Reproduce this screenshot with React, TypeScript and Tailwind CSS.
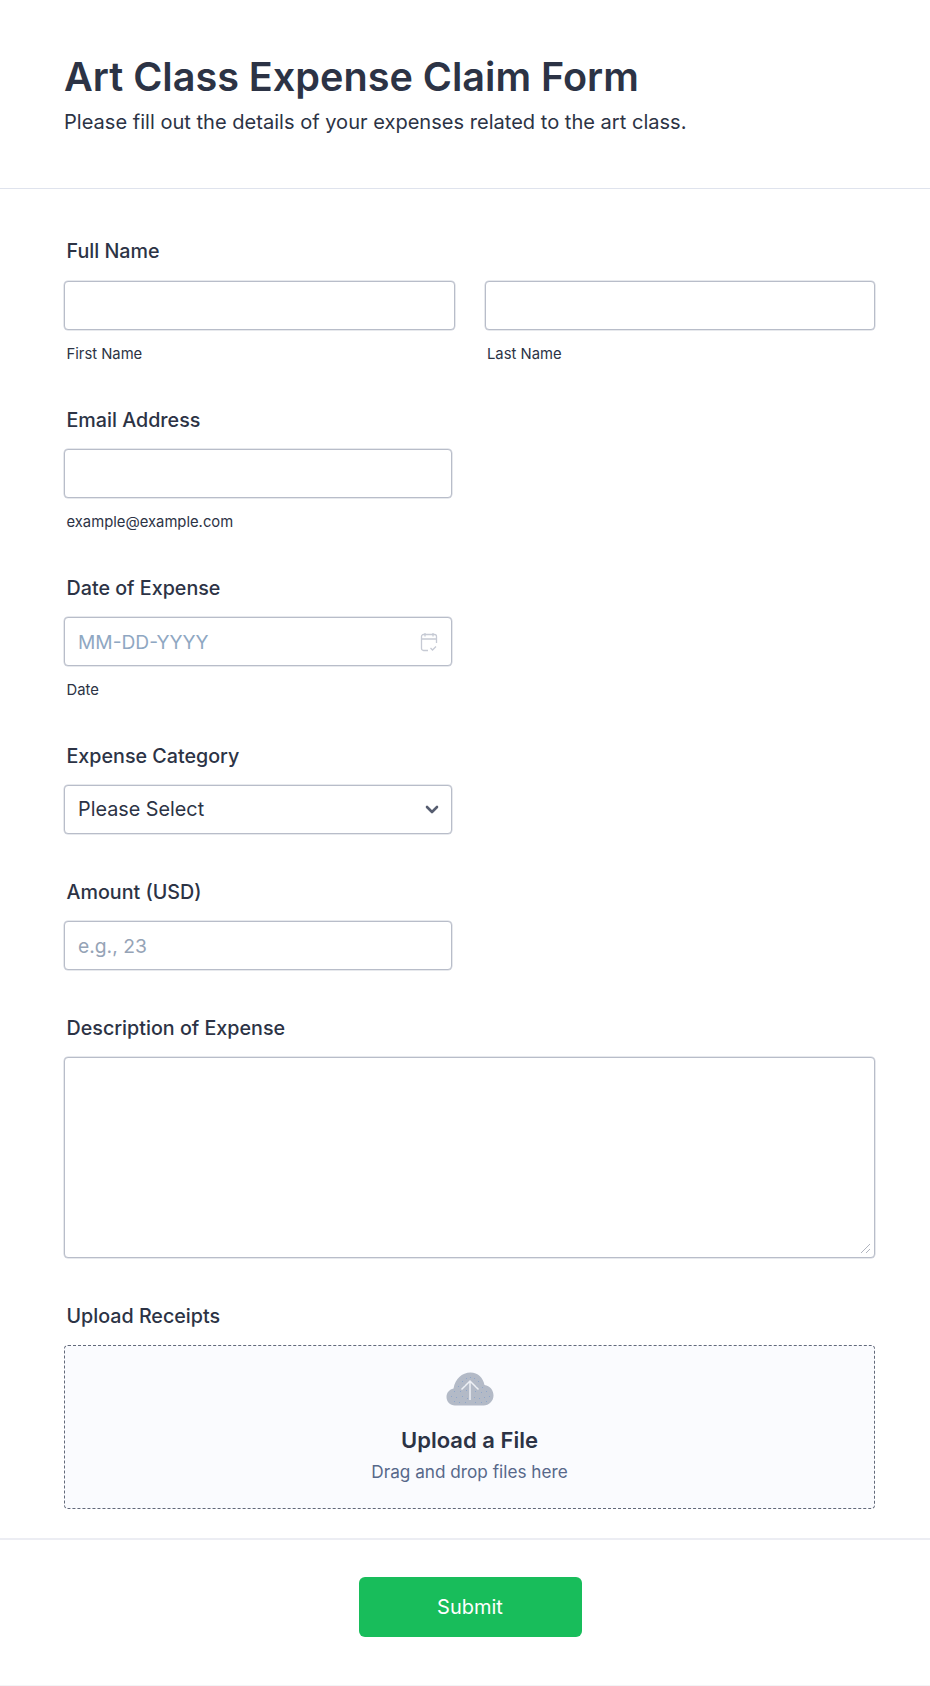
const font = "font-['Inter','Noto_Sans',sans-serif]";
const inputBox = "h-[49px] rounded-[4px] border border-[#b8bdc9] bg-white shadow-[0_0_0_0.5px_#d0d3dc]";

function Label({ children }: { children: React.ReactNode }) {
  return <div className="h-[24px] mb-[17px] pl-[2.5px] text-[19.7px] leading-[24px] font-medium text-[#2c3345]">{children}</div>;
}
function Sub({ children }: { children: React.ReactNode }) {
  return <div className="mt-[16px] h-[16px] pl-[2.5px] text-[14.8px] leading-[16px] text-[#2c3345]">{children}</div>;
}

const dots: [number, number][] = [
  [16, 9], [20, 6], [24, 5], [28, 6], [32, 9], [12, 14], [18, 13], [30, 14], [36, 15],
  [8, 19], [14, 19], [20, 18], [29, 19], [35, 20], [40, 19], [5, 24], [10, 25], [16, 24],
  [21, 26], [28, 25], [33, 26], [38, 25], [43, 24], [8, 29], [13, 30], [19, 30], [29, 30], [35, 30], [40, 29],
];

export default function App() {
  return (
    <div className={`${font} min-h-[1686px] w-[930px] bg-white flex flex-col`}>
      <header className="h-[189px] border-b border-[#dfe3ed] pl-[64px] pr-[55px] pt-[51px]">
        <h1 className="text-[39.6px] leading-[52px] font-semibold text-[#2c3345]">Art Class Expense Claim Form</h1>
        <p className="mt-[7px] text-[20.07px] leading-[24px] text-[#2c3345]">Please fill out the details of your expenses related to the art class.</p>
      </header>
      <main className="pl-[64px] pr-[55px] pt-[50px] flex flex-col gap-[46px]">
        <section>
          <div className="h-[25px] mb-[17px] pl-[2.5px] text-[19.7px] leading-[24px] font-medium text-[#2c3345]">Full Name</div>
          <div className="grid grid-cols-2 gap-[30px]">
            <div><div className={inputBox} /><Sub>First Name</Sub></div>
            <div><div className={inputBox} /><Sub>Last Name</Sub></div>
          </div>
        </section>
        <section>
          <Label>Email Address</Label>
          <div className={`${inputBox} w-[388px]`} />
          <Sub>example@example.com</Sub>
        </section>
        <section>
          <Label>Date of Expense</Label>
          <div className={`${inputBox} w-[388px] flex items-center justify-between pl-[13px] pr-[13px]`}>
            <span className="pt-[1px] text-[19.2px] text-[#8fa7c2]">MM-DD-YYYY</span>
            <svg width="18" height="20" viewBox="0 0 18 20" fill="none" stroke="#c6cad4" strokeWidth="1.3">
              <path d="M8 18.500H3.500a2 2 0 0 1-2-2V4.500a2 2 0 0 1 2-2h11a2 2 0 0 1 2 2V11" />
              <path d="M1.500 7h15M5 1v3.500M13 1v3.500" />
              <path d="M10.500 16l2 2 3.500-3.500" />
            </svg>
          </div>
          <Sub>Date</Sub>
        </section>
        <section>
          <Label>Expense Category</Label>
          <div className={`${inputBox} w-[388px] flex items-center justify-between pl-[13px] pr-[12px]`}>
            <span className="pt-[1px] text-[19.8px] text-[#2c3345]">Please Select</span>
            <svg width="14" height="9" viewBox="0 0 14 9" fill="none" stroke="#565d70" strokeWidth="2.6" strokeLinecap="round" strokeLinejoin="round">
              <path d="M2 2l5 5 5-5" />
            </svg>
          </div>
        </section>
        <section>
          <Label>Amount (USD)</Label>
          <div className={`${inputBox} w-[388px] flex items-center pl-[13px]`}>
            <span className="pt-[1px] text-[19.3px] text-[#95a3b6]">e.g., 23</span>
          </div>
        </section>
        <section>
          <Label>Description of Expense</Label>
          <div className="relative h-[201px] rounded-[4px] border border-[#b8bdc9] bg-white shadow-[0_0_0_0.5px_#d0d3dc]">
            <svg className="absolute right-[3px] bottom-[3px]" width="11" height="11" viewBox="0 0 11 11" fill="none" stroke="#b0b4bf" strokeWidth="1">
              <path d="M1 10L10 1M6 10l4-4" />
            </svg>
          </div>
        </section>
        <section>
          <Label>Upload Receipts</Label>
          <div className="h-[164px] rounded-[4px] border border-dashed border-[#62697a] bg-[#fafbfe] flex flex-col items-center pt-[26px]">
            <svg width="48" height="34" viewBox="0 0 48 34">
              <path fill="#b3bac7" d="M9 33.500C4 33.500 .5 29.500 .5 25c0-4.500 3-7.500 7-8.500C9 7 16 .5 24.500 .5 32 .5 37 5.500 38.500 13c5.500 1 9 5 9 10.500 0 5.500-4.500 10-10 10Z" />
              {dots.map(([x, y]) => (
                <rect key={`${x}-${y}`} x={x} y={y} width="1" height="1" fill="#8fa6c9" />
              ))}
              <path fill="none" stroke="#eef0f5" strokeWidth="1.500" d="M24 28V9M15.500 17.500 24 9l8.500 8.500" />
            </svg>
            <div className="mt-[20px] text-[22px] leading-[28px] font-semibold text-[#2c3345]">Upload a File</div>
            <div className="mt-[6px] text-[17.2px] leading-[24px] text-[#57688a]">Drag and drop files here</div>
          </div>
        </section>
      </main>
      <footer className="mt-[29px] h-[148px] border-t-2 border-[#ecedf3] border-b border-b-[#f3f4f6] flex justify-center pl-[10px] pt-[37px]">
        <button className="h-[60px] w-[223px] rounded-[6px] bg-[#18bd5b] text-[20px] font-normal text-white">Submit</button>
      </footer>
    </div>
  );
}
